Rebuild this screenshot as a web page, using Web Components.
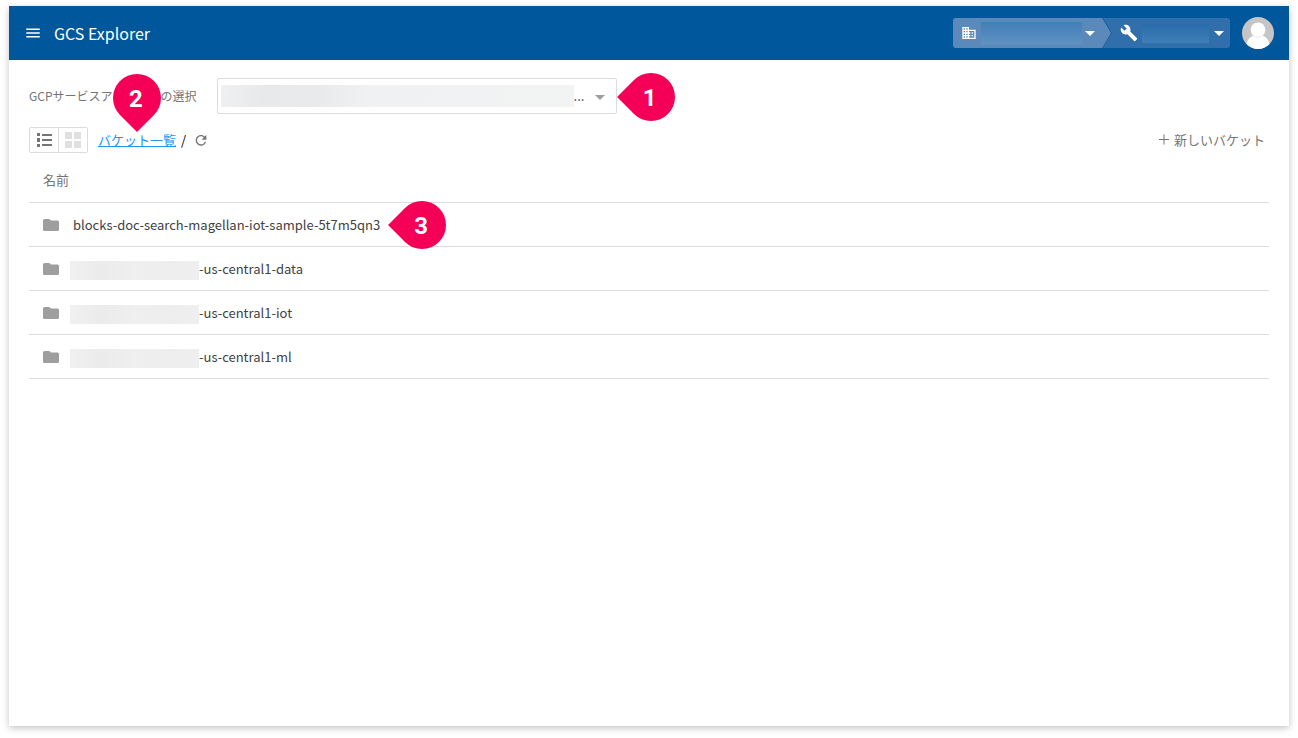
<!DOCTYPE html>
<html lang="ja">
<head>
<meta charset="utf-8">
<title>GCS Explorer</title>
<style>
  body {
    margin: 0;
    background: #fff;
    color: #424242;
    font-family: "Noto Sans CJK JP", "Noto Sans", sans-serif;
    font-size: 13px;
    line-height: 20px;
  }
</style>
</head>
<body>
<gcs-app></gcs-app>

<template id="t-app">
  <style>
    :host { display: flex; flex-direction: column; box-sizing: border-box; min-height: calc(100vh - 18px); margin: 6px 9px 12px; background: #fff; box-shadow: 0 2px 7px rgba(0,0,0,.24); }
    main { padding: 18px 20px; }
  </style>
  <app-bar heading="GCS Explorer">
    <scope-switcher></scope-switcher>
    <user-avatar></user-avatar>
  </app-bar>
  <main>
    <account-picker></account-picker>
    <bucket-toolbar></bucket-toolbar>
    <bucket-table></bucket-table>
  </main>
</template>

<template id="t-bar">
  <style>
    :host { display: flex; align-items: center; height: 54px; padding: 0 15px; background: #01579b; color: #fff; }
    button { display: flex; padding: 0; border: 0; background: none; color: inherit; }
    svg { width: 18px; height: 18px; fill: currentColor; }
    h1 { margin: 0 auto 0 12px; font-size: 16px; line-height: 24px; font-weight: 400; }
    .end { display: flex; align-items: center; gap: 12px; }
  </style>
  <button type="button" aria-label="メニュー"><svg viewBox="0 0 24 24"><path d="M3 18h18v-2H3v2zm0-5h18v-2H3v2zm0-7v2h18V6H3z"/></svg></button>
  <h1></h1>
  <div class="end"><slot></slot></div>
</template>

<template id="t-scope">
  <style>
    :host { display: flex; height: 30px; border-radius: 3px; overflow: hidden; background: #306fab; }
    button { display: flex; align-items: center; height: 30px; padding: 0; border: 0; color: #fff; background: none; }
    .org { width: 159px; padding: 0 15px 0 8px; background: #5b8aba; clip-path: polygon(0 0, 149px 0, 158px 50%, 149px 100%, 0 100%); }
    .edge { display: flex; filter: drop-shadow(1px 0 0 #1c5e9d); }
    .project { width: 118px; padding: 0 4px 0 7px; }
    svg { fill: #fff; flex: none; }
    .mask { flex: 1; }
    .org .mask { height: 23px; margin: 0 1px 0 4px; background: linear-gradient(#427fb8, #5f92c2); }
    .project .mask { height: 19px; margin: 0 3px 0 3px; background: linear-gradient(#2a6cab, #3f7fb8); }
  </style>
  <div class="edge">
    <button type="button" class="org" aria-label="組織">
      <svg width="16" height="16" viewBox="0 0 24 24"><path d="M12 7V3H2v18h20V7H12zM6 19H4v-2h2v2zm0-4H4v-2h2v2zm0-4H4V9h2v2zm0-4H4V5h2v2zm4 12H8v-2h2v2zm0-4H8v-2h2v2zm0-4H8V9h2v2zm0-4H8V5h2v2zm10 12h-8v-2h2v-2h-2v-2h2v-2h-2V9h8v10zm-2-8h-2v2h2v-2zm0 4h-2v2h2v-2z"/></svg>
      <span class="mask"></span>
      <svg width="14" height="18" viewBox="5 3 14 18"><path d="M7 10h10l-5 5z"/></svg>
    </button>
  </div>
  <button type="button" class="project" aria-label="プロジェクト">
    <svg width="20" height="18" viewBox="0 0 24 24" preserveAspectRatio="xMidYMid meet"><path d="M22.700 19l-9.100-9.100c.9-2.300.4-5-1.500-6.900-2-2-5-2.400-7.400-1.300L9 6 6 9 1.600 4.700C.4 7.100.9 10.100 2.900 12.100c1.900 1.900 4.600 2.400 6.900 1.500l9.100 9.100c.4.4 1 .4 1.400 0l2.300-2.300c.5-.4.5-1.100.1-1.400z"/></svg>
    <span class="mask"></span>
    <svg width="14" height="18" viewBox="5 3 14 18"><path d="M7 10h10l-5 5z"/></svg>
  </button>
</template>

<template id="t-avatar">
  <style>
    :host { display: flex; }
    button { display: flex; padding: 0; border: 0; border-radius: 50%; overflow: hidden; background: #c5c5c5; }
  </style>
  <button type="button" aria-label="アカウント"><svg width="32" height="32" viewBox="0 0 32 32"><path fill="#fff" d="M16 5.500c-4.200 0-7.300 3.200-7.300 7.400 0 2.500 1.100 4.500 2.800 5.800C8 19.600 5.500 22.500 4.500 27v5h23v-5c-1-4.500-3.500-7.400-7-8.300 1.700-1.300 2.800-3.300 2.800-5.800 0-4.200-3.100-7.400-7.300-7.400z"/><path fill="none" stroke="#dedede" stroke-width=".6" d="M11.500 18.700c2.700 1.900 6.300 1.900 9 0"/></svg></button>
</template>

<template id="t-picker">
  <style>
    :host { display: flex; align-items: center; gap: 20px; margin-bottom: 13px; }
    label { color: #757575; font-size: 12px; white-space: nowrap; }
    .field { position: relative; width: 400px; }
    select {
      display: block; width: 100%; height: 36px; padding: 0 20px 0 356px; box-sizing: border-box;
      appearance: none; border: 1px solid #dcdcdc; border-radius: 2px; color: #424242; font: inherit;
      background: linear-gradient(100deg, #eff0f1, #e8e9eb 12%, #e9eaec 28%, #f0f1f2 42%, #f2f3f3) 3px 6px / 353px 22px no-repeat, #fff;
    }
    .arrow { position: absolute; right: 8px; top: 10px; fill: #9e9e9e; pointer-events: none; }
    map-pin { position: absolute; left: calc(100% + 10px); top: -5px; }
  </style>
  <label for="account">GCPサービスアカウントの選択</label>
  <div class="field">
    <select id="account"><option>...</option></select>
    <svg class="arrow" width="18" height="18" viewBox="3 3 18 18"><path d="M7 10l5 5 5-5z"/></svg>
    <map-pin points="left">1</map-pin>
  </div>
</template>

<template id="t-toolbar">
  <style>
    :host { display: flex; align-items: center; margin-bottom: 5px; }
    button { display: flex; align-items: center; justify-content: center; padding: 0; border: 0; background: none; color: #757575; font: inherit; line-height: 20px; }
    svg { display: block; fill: currentColor; }
    .views { display: flex; margin-right: 10px; border: 1px solid #dcdcdc; border-radius: 2px; }
    .views button { width: 28px; height: 24px; }
    .views button + button { border-left: 1px solid #dcdcdc; color: #e0e0e0; width: 29px; }
    nav { display: flex; align-items: center; gap: 5px; color: #000; }
    .crumb { position: relative; }
    a { color: #2196f3; text-decoration: underline; }
    map-pin { position: absolute; left: calc(50% - 24px); bottom: 28px; }
    .reload { margin-left: 2px; }
    .new { margin-left: auto; margin-right: 4px; gap: 2px; }
  </style>
  <div class="views">
    <button type="button" aria-label="リスト表示"><svg width="18" height="16" viewBox="0 0 18 16"><path d="M2 1h3v3H2zM2 6h3v4H2zM2 12h3v3H2zM7 2h10v2H7zM7 7h10v2H7zM7 12h10v2H7z"/></svg></button>
    <button type="button" aria-label="グリッド表示"><svg width="16" height="16" viewBox="0 0 16 16"><path d="M0 0h7v7H0zM9 0h7v7H9zM0 9h7v7H0zM9 9h7v7H9z"/></svg></button>
  </div>
  <nav>
    <span class="crumb"><a href="#">バケット一覧</a><map-pin points="down">2</map-pin></span>
    <span>/</span>
    <button type="button" class="reload" aria-label="更新"><svg width="16" height="18" viewBox="0 -2 24 27"><path d="M17.650 6.350C16.200 4.900 14.210 4 12 4c-4.420 0-7.990 3.580-7.990 8s3.570 8 7.990 8c3.730 0 6.840-2.550 7.730-6h-2.080c-.82 2.330-3.040 4-5.650 4-3.310 0-6-2.690-6-6s2.690-6 6-6c1.660 0 3.140.69 4.220 1.780L13 11h7V4l-2.350 2.350z"/></svg></button>
  </nav>
  <button type="button" class="new"><svg width="16" height="16" viewBox="0 0 16 16"><path d="M3 7h4.500V2.500h1V7H13v1H8.500v4.500h-1V8H3z"/></svg>新しいバケット</button>
</template>

<template id="t-table">
  <style>
    :host { display: block; }
    table { width: 100%; border-collapse: separate; border-spacing: 0; }
    th, td { box-sizing: border-box; height: 44px; padding: 0 14px; border-bottom: 1px solid #dcdcdc; text-align: left; }
    th { height: 45px; color: #757575; font-weight: 400; }
    .cell { display: flex; align-items: center; }
    svg { width: 16px; height: 16px; margin-right: 14px; fill: #9e9e9e; }
    a { color: #424242; text-decoration: none; display: flex; align-items: center; }
    .mask { width: 129px; height: 19px; margin: 4px 0 0 -3px; background: linear-gradient(90deg, #f0f0f0, #ebebeb 25%, #efefef 50%, #ededed 80%, #efefef); }
    .spot { position: relative; }
    map-pin { position: absolute; left: calc(100% + 18px); top: -14px; }
  </style>
  <table>
    <thead><tr><th scope="col">名前</th></tr></thead>
    <tbody></tbody>
  </table>
</template>

<template id="t-pin">
  <style>
    :host { display: grid; place-items: center; width: 48px; height: 48px; color: #fff; font: 700 24px/46px Roboto, sans-serif; pointer-events: none; }
    .shape, .num { grid-area: 1 / 1; }
    .shape { width: 48px; height: 48px; background: #f50057; border-radius: 50% 50% 50% 0; }
    :host([points="left"]) .shape { rotate: 45deg; }
    :host([points="down"]) .shape { rotate: -45deg; }
    .num { z-index: 1; padding: 2px 2px 0 0; }
  </style>
  <span class="shape"></span><span class="num"><slot></slot></span>
</template>

<script>
  class Base extends HTMLElement {
    constructor() {
      super();
      this.attachShadow({ mode: "open" })
        .append(document.getElementById(this.constructor.template).content.cloneNode(true));
    }
  }
  customElements.define("map-pin", class extends Base { static template = "t-pin"; });
  customElements.define("user-avatar", class extends Base { static template = "t-avatar"; });
  customElements.define("scope-switcher", class extends Base { static template = "t-scope"; });
  customElements.define("account-picker", class extends Base { static template = "t-picker"; });
  customElements.define("bucket-toolbar", class extends Base { static template = "t-toolbar"; });
  customElements.define("app-bar", class extends Base {
    static template = "t-bar";
    connectedCallback() {
      this.shadowRoot.querySelector("h1").textContent = this.getAttribute("heading");
    }
  });
  customElements.define("bucket-table", class extends Base {
    static template = "t-table";
    connectedCallback() {
      const buckets = [
        { name: "blocks-doc-search-magellan-iot-sample-5t7m5qn3", pin: "3" },
        { name: "-us-central1-data", masked: true },
        { name: "-us-central1-iot", masked: true },
        { name: "-us-central1-ml", masked: true }
      ];
      const icon = '<svg viewBox="0 0 16 16"><path d="M1.500 2H6.300L8 3.500H14.500Q16 3.500 16 5V12.500Q16 14 14.500 14H1.500Q0 14 0 12.500V3.500Q0 2 1.500 2z"/></svg>';
      this.shadowRoot.querySelector("tbody").innerHTML = buckets.map(b =>
        `<tr><td><div class="cell">${icon}<span class="spot"><a href="#">${b.masked ? '<span class="mask"></span>' : ""}${b.name}</a>${b.pin ? `<map-pin points="left">${b.pin}</map-pin>` : ""}</span></div></td></tr>`
      ).join("");
    }
  });
  customElements.define("gcs-app", class extends Base { static template = "t-app"; });
</script>
</body>
</html>
